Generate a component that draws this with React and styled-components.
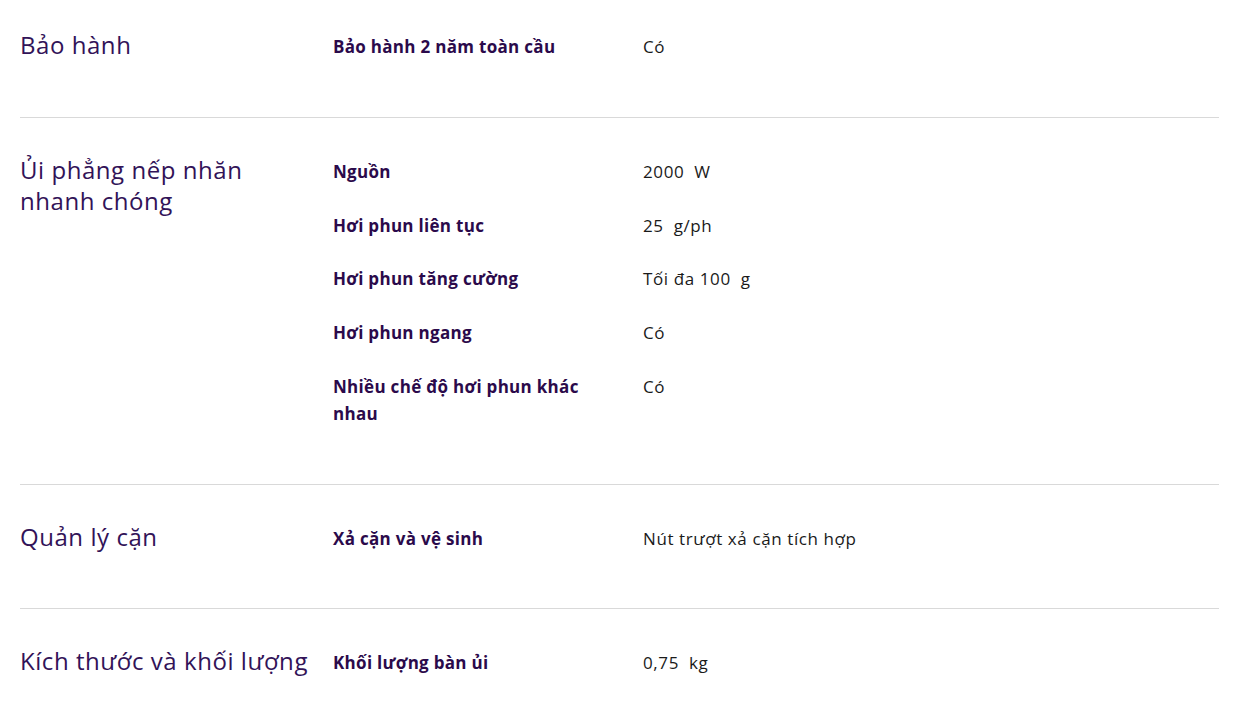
import React from "react";
import styled, { createGlobalStyle } from "styled-components";

const Global = createGlobalStyle`
  html, body { margin: 0; padding: 0; background: #fff; }
  body { font-family: "Open Sans", "Noto Sans", sans-serif; }
`;

const Page = styled.div`
  padding: 0 16px 0 20px;
`;

const Section = styled.section`
  display: grid;
  grid-template-columns: 313px 1fr;
  align-items: start;
  padding: ${(p) => (p.$first ? "33px" : "40px")} 0 30px;
  border-top: ${(p) => (p.$first ? "none" : "1px solid #d9d9d9")};
`;

const Heading = styled.h2`
  margin: -4px 0 0;
  font-family: "Open Sans", sans-serif;
  font-weight: 400;
  font-size: 24px;
  line-height: 31px;
  letter-spacing: 0.55px;
  color: #321358;
  padding-right: 24px;
`;

const SpecList = styled.dl`
  margin: 0;
`;

const SpecRow = styled.div`
  display: grid;
  grid-template-columns: 310px 1fr;
  padding-bottom: 26.75px;
`;

const Label = styled.dt`
  margin: 0;
  padding-right: 26px;
  font-weight: 700;
  font-size: 17px;
  line-height: 27px;
  letter-spacing: 0.3px;
  color: #2b0a4b;
`;

const Value = styled.dd`
  margin: 0;
  font-size: 17px;
  line-height: 27px;
  letter-spacing: 0.6px;
  white-space: pre-wrap;
  color: #1a1a1a;
`;

const data = [
  { title: "Bảo hành", rows: [["Bảo hành 2 năm toàn cầu", "Có"]] },
  {
    title: "Ủi phẳng nếp nhăn nhanh chóng",
    rows: [
      ["Nguồn", "2000  W"],
      ["Hơi phun liên tục", "25  g/ph"],
      ["Hơi phun tăng cường", "Tối đa 100  g"],
      ["Hơi phun ngang", "Có"],
      ["Nhiều chế độ hơi phun khác nhau", "Có"],
    ],
  },
  { title: "Quản lý cặn", rows: [["Xả cặn và vệ sinh", "Nút trượt xả cặn tích hợp"]] },
  { title: "Kích thước và khối lượng", rows: [["Khối lượng bàn ủi", "0,75  kg"]] },
];

export default function App() {
  return (
    <Page>
      <Global />
      {data.map((s, i) => (
        <Section key={s.title} $first={i === 0}>
          <Heading>{s.title}</Heading>
          <SpecList>
            {s.rows.map(([l, v]) => (
              <SpecRow key={l}>
                <Label>{l}</Label>
                <Value>{v}</Value>
              </SpecRow>
            ))}
          </SpecList>
        </Section>
      ))}
    </Page>
  );
}
